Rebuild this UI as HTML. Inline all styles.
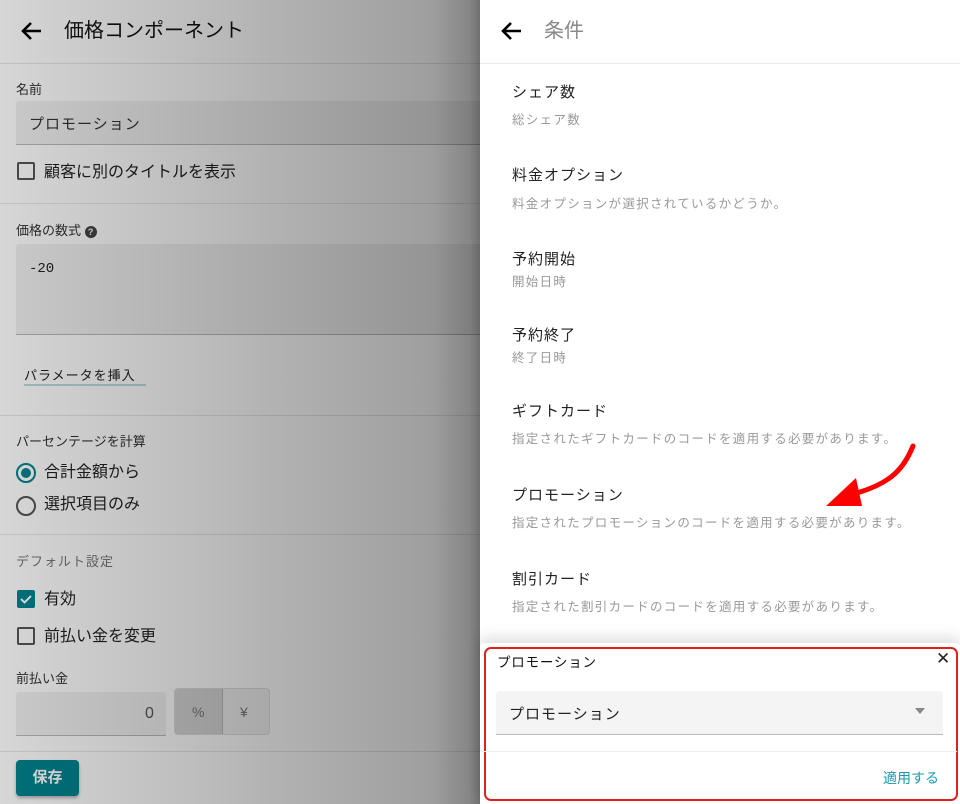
<!DOCTYPE html>
<html><head><meta charset="utf-8"><style>
*{box-sizing:border-box;margin:0;padding:0}
body{width:960px;height:804px;overflow:hidden;position:relative;background:#fff;font-family:"Liberation Sans","Noto Sans CJK JP",sans-serif;color:#222}
.a{position:absolute;white-space:nowrap}
#left{position:absolute;left:0;top:0;width:480px;height:804px;background:#fff;overflow:hidden}
#ov{position:absolute;left:0;top:0;width:480px;height:804px;background:linear-gradient(to right,rgba(0,0,0,.16),rgba(0,0,0,.38) 90%,rgba(0,0,0,.5))}
.hr{position:absolute;left:0;height:1px;background:#e6e6e6;width:480px}
.inp{position:absolute;background:#f0f0f0;border-bottom:1px solid #bbb;border-radius:3px 3px 0 0}
.cb{position:absolute;width:18px;height:18px;border:2px solid #555;border-radius:2px}
.rd{position:absolute;width:20px;height:20px;border:2px solid #555;border-radius:50%}
.t{font-size:13px;color:#333;line-height:1}
.tb{font-size:16px;color:#222;line-height:1}
.it{font-size:15px;color:#222;line-height:1;letter-spacing:1px}
.ds{font-size:12.5px;color:#999;line-height:1;letter-spacing:1.3px}
</style></head><body>
<div id="left">
<svg class="a" style="left:20px;top:19px" width="24" height="24" viewBox="0 0 24 24"><path d="M21 12H4M11 4l-8 8 8 8" stroke="#000" stroke-width="2.6" fill="none"/></svg>
<div class="a" style="left:64px;top:19px;font-size:20px;line-height:24px;color:#111">価格コンポーネント</div>
<div class="hr" style="top:63px"></div>
<div class="a t" style="left:16px;top:83px">名前</div>
<div class="inp" style="left:16px;top:101px;width:470px;height:44px"></div>
<div class="a" style="left:29px;top:113px;font-size:15px;color:#333;letter-spacing:1px">プロモーション</div>
<div class="cb" style="left:17px;top:162px"></div>
<div class="a tb" style="left:44px;top:165px">顧客に別のタイトルを表示</div>
<div class="hr" style="top:203px"></div>
<div class="a t" style="left:16px;top:224px">価格の数式 <span style="display:inline-block;width:12px;height:12px;border-radius:50%;background:#444;color:#fff;font-size:9px;text-align:center;line-height:12px;font-weight:bold">?</span></div>
<div class="inp" style="left:16px;top:244px;width:470px;height:91px"></div>
<div class="a" style="left:29px;top:261px;font-family:'Liberation Mono',monospace;font-size:14px;color:#222">-20</div>
<div class="a" style="left:24px;top:365px;font-size:13px;color:#222;letter-spacing:1px">パラメータを挿入</div>
<div class="a" style="left:24px;top:384px;width:122px;height:2px;background:#b8dde0"></div>
<div class="hr" style="top:415px"></div>
<div class="a t" style="left:16px;top:435px">パーセンテージを計算</div>
<div class="rd" style="left:16px;top:463px;border-color:#00838f"><div style="position:absolute;left:3px;top:3px;width:10px;height:10px;border-radius:50%;background:#00838f"></div></div>
<div class="a tb" style="left:44px;top:465px">合計金額から</div>
<div class="rd" style="left:16px;top:496px"></div>
<div class="a tb" style="left:44px;top:497px">選択項目のみ</div>
<div class="hr" style="top:534px"></div>
<div class="a t" style="left:16px;top:555px;color:#777;letter-spacing:1px">デフォルト設定</div>
<div class="a" style="left:17px;top:590px;width:18px;height:18px;background:#00838f;border-radius:2px"><svg width="18" height="18"><path d="M4 9l3.5 3.5L14 6" stroke="#fff" stroke-width="2" fill="none"/></svg></div>
<div class="a tb" style="left:44px;top:592px">有効</div>
<div class="cb" style="left:17px;top:627px"></div>
<div class="a tb" style="left:44px;top:629px">前払い金を変更</div>
<div class="a t" style="left:16px;top:672px">前払い金</div>
<div class="inp" style="left:16px;top:692px;width:150px;height:44px"></div>
<div class="a" style="left:145px;top:705px;font-size:16px;color:#555">0</div>
<div class="a" style="left:174px;top:688px;width:96px;height:47px;border:1px solid #ddd;border-radius:4px;background:#f0f0f0;overflow:hidden">
<div style="position:absolute;left:0;top:0;width:48px;height:47px;background:#d6d6d6;border-right:1px solid #bbb"></div>
<div style="position:absolute;left:17px;top:15px;font-size:14px;color:#777">%</div>
<div style="position:absolute;left:65px;top:15px;font-size:14px;color:#777">¥</div></div>
<div class="hr" style="top:751px"></div>
<div class="a" style="left:16px;top:760px;width:63px;height:36px;background:#00838f;border-radius:4px;box-shadow:0 2px 3px rgba(0,0,0,.3);color:#fff;font-size:15px;font-weight:bold;text-align:center;line-height:36px">保存</div>
<div id="ov"></div>
</div>
<div class="a" style="left:470px;top:0;width:10px;height:804px;background:linear-gradient(to right,rgba(0,0,0,0),rgba(0,0,0,.12))"></div>

<svg class="a" style="left:500px;top:19px" width="24" height="24" viewBox="0 0 24 24"><path d="M21 12H4M11 4l-8 8 8 8" stroke="#000" stroke-width="2.6" fill="none"/></svg>
<div class="a" style="left:544px;top:19px;font-size:20px;line-height:24px;color:#888">条件</div>
<div class="a" style="left:480px;top:63px;width:480px;height:1px;background:#eaeaea"></div>
<div class="a it" style="left:512px;top:85px">シェア数</div><div class="a ds" style="left:512px;top:114px">総シェア数</div>
<div class="a it" style="left:512px;top:168px">料金オプション</div><div class="a ds" style="left:512px;top:198px">料金オプションが選択されているかどうか。</div>
<div class="a it" style="left:512px;top:252px">予約開始</div><div class="a ds" style="left:512px;top:276px">開始日時</div>
<div class="a it" style="left:512px;top:328px">予約終了</div><div class="a ds" style="left:512px;top:352px">終了日時</div>
<div class="a it" style="left:512px;top:404px">ギフトカード</div><div class="a ds" style="left:512px;top:433px">指定されたギフトカードのコードを適用する必要があります。</div>
<div class="a it" style="left:512px;top:488px">プロモーション</div><div class="a ds" style="left:512px;top:517px">指定されたプロモーションのコードを適用する必要があります。</div>
<div class="a it" style="left:512px;top:572px">割引カード</div><div class="a ds" style="left:512px;top:601px">指定された割引カードのコードを適用する必要があります。</div>
<svg class="a" style="left:820px;top:440px" width="100" height="75"><path d="M93 6C84 28 72 42 40 52" stroke="#f00" stroke-width="5" fill="none" stroke-linecap="round"/><path d="M6 66L36 38L42 66Z" fill="#f00"/></svg>

<div class="a" style="left:480px;top:643px;width:480px;height:161px;background:#fff;box-shadow:0 -6px 14px rgba(0,0,0,.12);border-radius:4px 4px 0 0"></div>
<div class="a" style="left:484px;top:647px;width:474px;height:154px;border:2px solid #e02020;border-radius:7px"></div>
<div class="a" style="left:497px;top:651px;font-size:13.5px;color:#111;letter-spacing:.8px">プロモーション</div>
<div class="a" style="left:936px;top:650px;font-size:17px;color:#222;line-height:1">✕</div>
<div class="a" style="left:496px;top:691px;width:447px;height:44px;background:#f4f4f4;border-bottom:1px solid #bbb;border-radius:4px 4px 0 0"></div>
<div class="a" style="left:509px;top:703px;font-size:15px;color:#222;letter-spacing:1px">プロモーション</div>
<div class="a" style="left:915px;top:708px;width:0;height:0;border-left:5px solid transparent;border-right:5px solid transparent;border-top:6px solid #888"></div>
<div class="a" style="left:481px;top:751px;width:476px;height:1px;background:#eee"></div>
<div class="a" style="left:883px;top:768px;font-size:14px;color:#1a9aa8">適用する</div>
</body></html>
